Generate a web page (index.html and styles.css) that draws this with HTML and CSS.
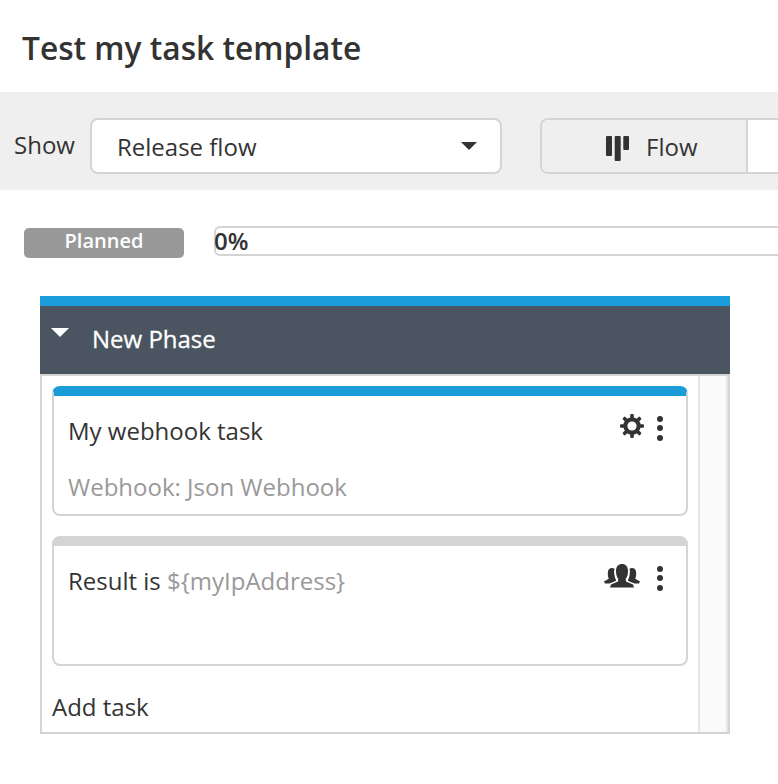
FILE: index.html
```html
<!DOCTYPE html>
<html lang="en">
<head>
    <meta charset="UTF-8">
    <meta name="viewport" content="width=device-width, initial-scale=1.0">
    <title>Test my task template</title>
    <link rel="stylesheet" href="styles.css">
</head>
<body>
    <h1 class="page-title">Test my task template</h1>

    <div class="toolbar">
        <span class="show-label">Show</span>
        <div class="select-box">
            <span>Release flow</span>
            <span class="select-caret"></span>
        </div>
        <div class="view-switch">
            <div class="view-btn active">
                <svg class="flow-icon" width="23" height="26" viewBox="0 0 23 26">
                    <rect x="0" y="0" width="6" height="20" rx="1"/>
                    <rect x="8.7" y="0" width="6" height="25" rx="1"/>
                    <rect x="17.3" y="0" width="5.7" height="14" rx="1"/>
                </svg>
                <span>Flow</span>
            </div>
            <div class="view-btn"></div>
        </div>
    </div>

    <div class="status-row">
        <span class="badge">Planned</span>
        <div class="progress"><span class="progress-text">0%</span></div>
    </div>

    <div class="phase">
        <div class="phase-header">
            <span class="phase-caret"></span>
            <span class="phase-title">New Phase</span>
        </div>
        <div class="phase-body">
            <div class="task-list">
                <div class="task task-blue">
                    <div class="task-top">
                        <span class="task-title">My webhook task</span>
                        <div class="task-icons">
                            <svg class="gear-icon" width="24" height="24" viewBox="0 0 24 24">
                                <g fill="#333">
                                    <rect x="10.2" y="0" width="3.6" height="24" rx="1"/>
                                    <rect x="0" y="10.2" width="24" height="3.6" rx="1"/>
                                    <rect x="10.2" y="0" width="3.6" height="24" rx="1" transform="rotate(45 12 12)"/>
                                    <rect x="10.2" y="0" width="3.6" height="24" rx="1" transform="rotate(-45 12 12)"/>
                                </g>
                                <circle cx="12" cy="12" r="8.7" fill="#333"/>
                                <circle cx="12" cy="12" r="4.6" fill="#fff"/>
                            </svg>
                            <span class="dots"><i></i><i></i><i></i></span>
                        </div>
                    </div>
                    <div class="task-sub">Webhook: Json Webhook</div>
                </div>
                <div class="task task-grey">
                    <div class="task-top">
                        <span class="task-title">Result is <span class="var">${myIpAddress}</span></span>
                        <div class="task-icons">
                            <svg class="people-icon" width="36" height="24" viewBox="0 0 36 24" fill="#333">
                                <path d="M0 17.5 L4.8 14.8 C4 13 3.8 11 3.8 9 C3.8 5.5 5.5 4 8 4 C9 4 9.8 4.2 10.5 4.7 C10 6.5 10 8.5 10.4 11 C10.7 13 11.2 14.5 12 15.8 L11.8 17 L5.5 19.5 L1 19.5 Z"/>
                                <path d="M36 17.5 L31.2 14.8 C32 13 32.2 11 32.2 9 C32.2 5.5 30.5 4 28 4 C27 4 26.2 4.2 25.5 4.7 C26 6.5 26 8.5 25.6 11 C25.3 13 24.8 14.5 24 15.8 L24.2 17 L30.5 19.5 L35 19.5 Z"/>
                                <path d="M6 23.5 L7 20.5 L14 17.5 L14.3 15 C12.8 13 12 10.5 12 7 C12 2.2 14.5 0 18 0 C21.5 0 24 2.2 24 7 C24 10.5 23.2 13 21.7 15 L22 17.5 L29 20.5 L30 23.5 Z"/>
                            </svg>
                            <span class="dots"><i></i><i></i><i></i></span>
                        </div>
                    </div>
                </div>
                <div class="add-task">Add task</div>
            </div>
            <div class="scroll-col"></div>
        </div>
    </div>
</body>
</html>
```

FILE: styles.css
```css
html, body {
    overflow: hidden;
}
body {
    margin: 0;
    height: 784px;
    font-family: "Open Sans", sans-serif;
    color: #333;
    background-color: #fff;
}
.page-title {
    margin: 0;
    padding: 27px 0 0 22px;
    height: 92px;
    box-sizing: border-box;
    font-size: 31.7px;
    line-height: 41px;
    font-weight: 600;
}
.toolbar {
    height: 98px;
    box-sizing: border-box;
    background-color: #efefef;
    display: flex;
    align-items: center;
    padding: 10px 0 0 14px;
}
.show-label {
    font-size: 24px;
    width: 76px;
    flex: none;
    position: relative;
    top: -2px;
}
.select-box {
    width: 412px;
    height: 56px;
    flex: none;
    box-sizing: border-box;
    background-color: #fff;
    border: 2px solid #d4d4d4;
    border-radius: 8px;
    display: flex;
    align-items: center;
    justify-content: space-between;
    padding: 0 23px 0 25px;
    font-size: 24px;
}
.select-caret {
    width: 0;
    height: 0;
    border-left: 8px solid transparent;
    border-right: 8px solid transparent;
    border-top: 8px solid #333;
    margin-bottom: 1px;
}
.view-switch {
    margin-left: 38px;
    height: 56px;
    flex: 1;
    box-sizing: border-box;
    border: 2px solid #d4d4d4;
    border-right: 0;
    border-radius: 8px 0 0 8px;
    display: flex;
    background-color: #fff;
}
.view-btn {
    flex: 1;
}
.view-btn.active {
    flex: none;
    width: 140px;
    background-color: #efefef;
    border-right: 2px solid #d4d4d4;
    border-radius: 6px 0 0 6px;
    display: flex;
    align-items: center;
    padding-left: 64px;
    font-size: 24px;
    gap: 17px;
}
.flow-icon {
    fill: #333;
    margin-top: 5px;
}
.status-row {
    display: flex;
    align-items: flex-start;
    padding: 36px 0 0 24px;
    height: 106px;
    box-sizing: border-box;
}
.badge {
    width: 160px;
    height: 30px;
    margin-top: 2px;
    flex: none;
    background-color: #999;
    border-radius: 5px;
    color: #fff;
    font-size: 20px;
    font-weight: 600;
    text-align: center;
    line-height: 26px;
}
.progress {
    margin-left: 30px;
    height: 30px;
    flex: 1;
    box-sizing: border-box;
    border: 2px solid #d4d4d4;
    border-right: 0;
    border-radius: 6px 0 0 6px;
}
.progress-text {
    font-size: 24px;
    font-weight: 600;
    line-height: 26px;
    display: block;
    margin-left: -2px;
}
.phase {
    margin-left: 40px;
    width: 690px;
}
.phase-header {
    height: 78px;
    box-sizing: border-box;
    background-color: #4a5561;
    border-top: 10px solid #1a9cd8;
    display: flex;
    align-items: center;
    color: #fff;
    font-size: 24px;
    padding-left: 11px;
}
.phase-caret {
    width: 0;
    height: 0;
    border-left: 9px solid transparent;
    border-right: 9px solid transparent;
    border-top: 9px solid #fff;
    margin-bottom: 16px;
}
.phase-title {
    margin-left: 23px;
    margin-bottom: 4px;
    -webkit-text-stroke: 0.3px #fff;
}
.phase-body {
    height: 360px;
    box-sizing: border-box;
    border: 2px solid #d4d4d4;
    display: flex;
}
.task-list {
    flex: 1;
    padding: 10px 10px 0;
}
.task {
    height: 130px;
    box-sizing: border-box;
    border: 2px solid #d4d4d4;
    border-radius: 8px;
    margin-bottom: 20px;
    padding: 0 23px 0 14px;
}
.task-blue {
    border-top: 10px solid #1a9cd8;
}
.task-grey {
    border-top: 10px solid #d4d4d4;
}
.task-top {
    display: flex;
    justify-content: space-between;
    align-items: flex-start;
    height: 70px;
    padding-top: 18px;
    box-sizing: border-box;
}
.task-title {
    font-size: 24px;
    line-height: 33px;
}
.var,
.task-sub {
    color: #999;
}
.task-sub {
    font-size: 24px;
    line-height: 33px;
    margin-top: 4px;
}
.task-icons {
    display: flex;
    align-items: flex-start;
}
.gear-icon {
    margin-right: 13px;
}
.people-icon {
    margin-right: 17px;
}
.dots {
    display: flex;
    flex-direction: column;
    gap: 3.3px;
    padding-top: 2px;
}
.dots i {
    display: block;
    width: 6px;
    height: 6px;
    border-radius: 50%;
    background-color: #333;
}
.add-task {
    font-size: 24px;
    line-height: 33px;
    margin-top: 24px;
}
.scroll-col {
    width: 30px;
    flex: none;
    box-sizing: border-box;
    background-color: #fafafa;
    border-left: 2px solid #e6e6e6;
    border-right: 2px solid #e6e6e6;
}
```
